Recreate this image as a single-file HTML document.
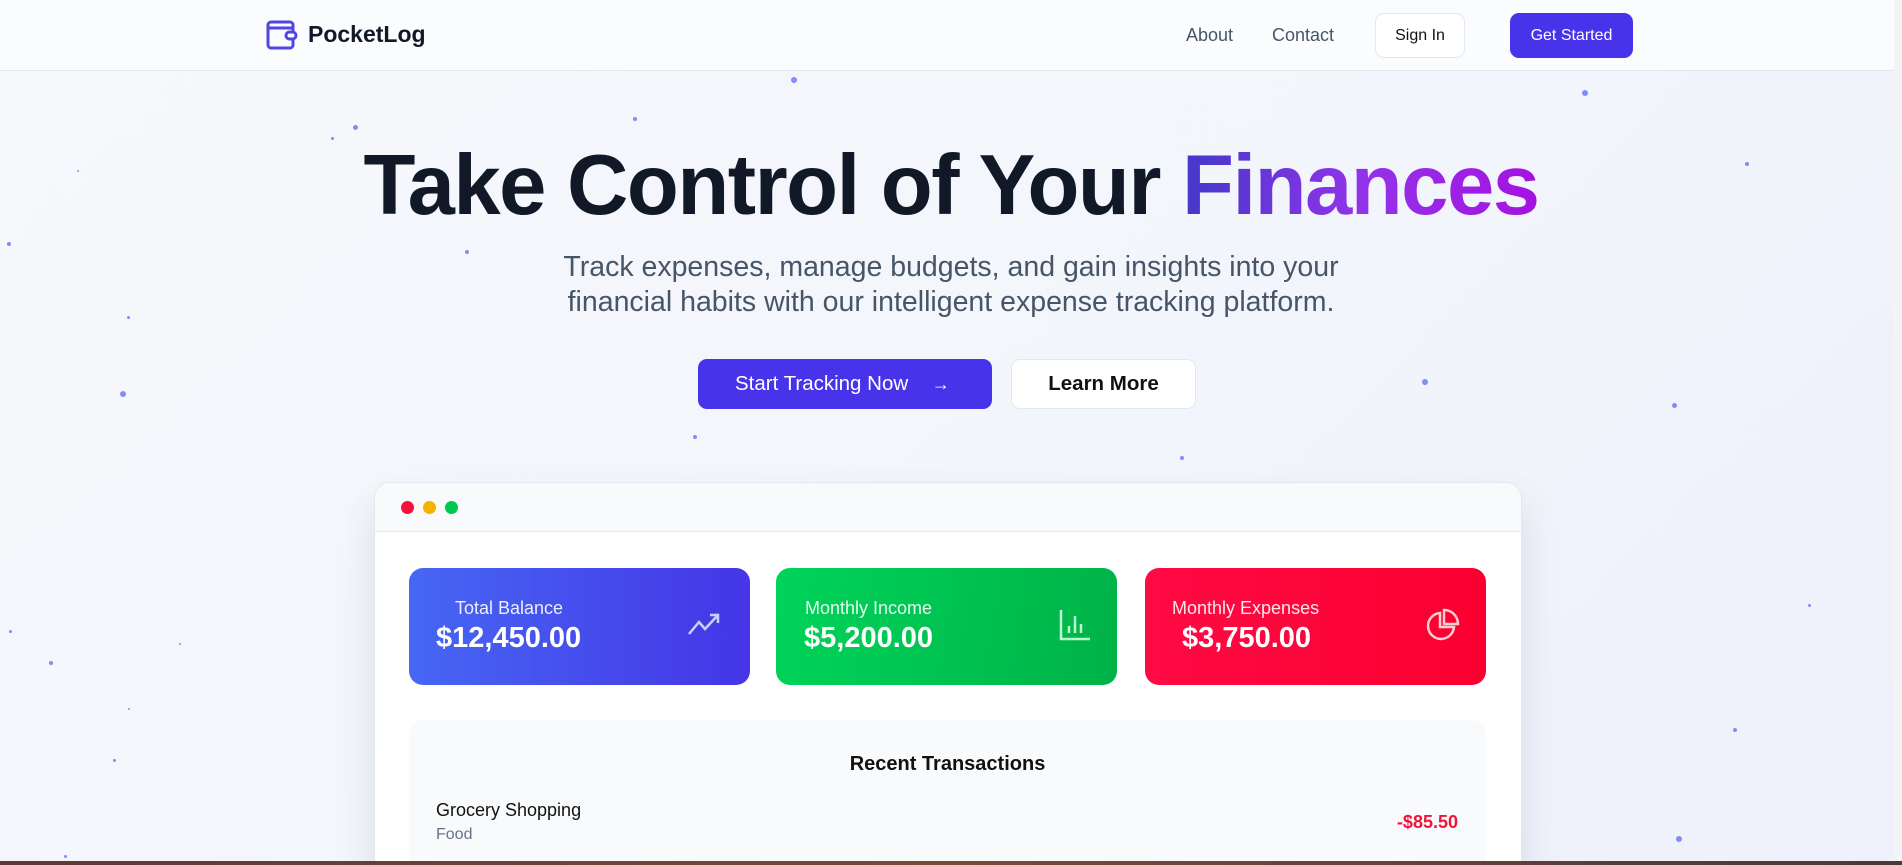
<!DOCTYPE html>
<html><head><meta charset="utf-8"><style>
*{margin:0;padding:0;box-sizing:border-box}
html,body{width:1902px;height:865px;overflow:hidden}
body{font-family:"Liberation Sans",sans-serif;background:linear-gradient(135deg,#f6f8fb 0%,#f2f5fb 60%,#eef0fb 100%);position:relative;color:#0f172a}
.nav{position:absolute;left:0;top:0;width:1902px;height:71px;background:#fbfcfe;border-bottom:1px solid #e2e8f0}
.abs{position:absolute}
.dot{position:absolute;border-radius:50%;background:#818cf8}
h1{position:absolute;left:0;width:1902px;top:136px;text-align:center;font-size:85px;font-weight:700;letter-spacing:-1.5px;color:#111827;line-height:100px}
h1 span{-webkit-background-clip:text;background-clip:text;color:transparent;background-image:linear-gradient(90deg,#4338ca,#9333ea,#a511e0)}
.sub{position:absolute;left:0;width:1902px;top:250px;text-align:center;font-size:28.5px;line-height:35px;color:#475569}
.card{position:absolute;border-radius:14px;color:#fff}
.card .l{position:absolute;font-size:18px;opacity:.9}
.card .v{position:absolute;font-size:29px;font-weight:700}
</style></head><body>
<div class="nav">
 <svg class="abs" style="left:266px;top:19px" width="32" height="32" viewBox="0 0 32 32" fill="none" stroke="#4f46e5" stroke-width="3"><rect x="2" y="3" width="25" height="26" rx="3"/><path d="M2 9h25"/><rect x="20" y="13" width="10" height="7" rx="3.5" fill="#fbfcfe"/></svg>
 <div class="abs" style="left:308px;top:21px;font-size:23px;font-weight:700;color:#111827">PocketLog</div>
 <div class="abs" style="left:1186px;top:25px;font-size:18px;color:#475569">About</div>
 <div class="abs" style="left:1272px;top:25px;font-size:18px;color:#475569">Contact</div>
 <div class="abs" style="left:1375px;top:13px;width:90px;height:45px;border:1px solid #e2e8f0;border-radius:9px;background:#fff;font-size:16px;text-align:center;line-height:43px;color:#111">Sign In</div>
 <div class="abs" style="left:1510px;top:13px;width:123px;height:45px;border-radius:9px;background:#4733ea;font-size:16px;text-align:center;line-height:45px;color:#fff">Get Started</div>
</div>
<div class="dot" style="left:791px;top:77px;width:6px;height:6px"></div>
<div class="dot" style="left:1582px;top:90px;width:6px;height:6px"></div>
<div class="dot" style="left:353px;top:125px;width:5px;height:5px"></div>
<div class="dot" style="left:633px;top:117px;width:4px;height:4px"></div>
<div class="dot" style="left:331px;top:137px;width:3px;height:3px"></div>
<div class="dot" style="left:1745px;top:162px;width:4px;height:4px"></div>
<div class="dot" style="left:77px;top:170px;width:2px;height:2px"></div>
<div class="dot" style="left:7px;top:242px;width:4px;height:4px"></div>
<div class="dot" style="left:465px;top:250px;width:4px;height:4px"></div>
<div class="dot" style="left:127px;top:316px;width:3px;height:3px"></div>
<div class="dot" style="left:120px;top:391px;width:6px;height:6px"></div>
<div class="dot" style="left:1422px;top:379px;width:6px;height:6px"></div>
<div class="dot" style="left:1672px;top:403px;width:5px;height:5px"></div>
<div class="dot" style="left:693px;top:435px;width:4px;height:4px"></div>
<div class="dot" style="left:1180px;top:456px;width:4px;height:4px"></div>
<div class="dot" style="left:1808px;top:604px;width:3px;height:3px"></div>
<div class="dot" style="left:9px;top:630px;width:3px;height:3px"></div>
<div class="dot" style="left:49px;top:661px;width:4px;height:4px"></div>
<div class="dot" style="left:179px;top:643px;width:2px;height:2px"></div>
<div class="dot" style="left:128px;top:708px;width:2px;height:2px"></div>
<div class="dot" style="left:1733px;top:728px;width:4px;height:4px"></div>
<div class="dot" style="left:113px;top:759px;width:3px;height:3px"></div>
<div class="dot" style="left:1676px;top:836px;width:6px;height:6px"></div>
<div class="dot" style="left:64px;top:855px;width:3px;height:3px"></div>
<h1>Take Control of Your <span>Finances</span></h1>
<div class="sub">Track expenses, manage budgets, and gain insights into your<br>financial habits with our intelligent expense tracking platform.</div>
<div class="abs" style="left:698px;top:359px;width:294px;height:50px;border-radius:9px;background:#4733ea;color:#fff;font-size:20.5px;line-height:50px;padding-left:37px">Start Tracking Now <span style="margin-left:18px;font-size:18px">→</span></div>
<div class="abs" style="left:1011px;top:359px;width:185px;height:50px;border-radius:9px;background:#fff;border:1px solid #e2e8f0;color:#111;font-size:20.5px;line-height:48px;text-align:center;font-weight:700">Learn More</div>
<div class="abs" style="left:374px;top:482px;width:1148px;height:400px;border-radius:16px;background:#fff;border:1px solid #e2e8f0;box-shadow:0 20px 40px rgba(15,23,42,.1);overflow:hidden">
 <div style="height:49px;background:#f8fafc;border-bottom:1px solid #e2e8f0;position:relative">
  <div class="dot" style="left:26px;top:18px;width:13px;height:13px;background:#f0143c"></div>
  <div class="dot" style="left:48px;top:18px;width:13px;height:13px;background:#f5b300"></div>
  <div class="dot" style="left:70px;top:18px;width:13px;height:13px;background:#00c851"></div>
 </div>
</div>
<div class="card" style="left:409px;top:568px;width:341px;height:117px;background:linear-gradient(90deg,#4667f4,#4535e6)">
 <div class="l" style="left:46px;top:30px">Total Balance</div><div class="v" style="left:27px;top:54px">$12,450.00</div>
 <svg class="abs" style="left:278px;top:42px" width="36" height="28" viewBox="0 0 36 28" fill="none" stroke="#c7d2fe" stroke-width="2.5"><path d="M2 24l10-12 6 7L31 5M23 5h8v8"/></svg>
</div>
<div class="card" style="left:776px;top:568px;width:341px;height:117px;background:linear-gradient(100deg,#00d45a,#00b248)">
 <div class="l" style="left:29px;top:30px">Monthly Income</div><div class="v" style="left:28px;top:54px">$5,200.00</div>
 <svg class="abs" style="left:282px;top:40px" width="34" height="34" viewBox="0 0 34 34" fill="none" stroke="#bbf7d0" stroke-width="2.5"><path d="M3 2v29h29M11 25v-7M17 25V8M23 25v-9"/></svg>
</div>
<div class="card" style="left:1145px;top:568px;width:341px;height:117px;background:linear-gradient(90deg,#ff0a44,#fa0030)">
 <div class="l" style="left:27px;top:30px">Monthly Expenses</div><div class="v" style="left:37px;top:54px">$3,750.00</div>
 <svg class="abs" style="left:279px;top:40px" width="36" height="36" viewBox="0 0 36 36" fill="none" stroke="#fecdd3" stroke-width="2.5"><path d="M16 5a13 13 0 1 0 14 14H16z"/><path d="M20 2v14h14A14 14 0 0 0 20 2z"/></svg>
</div>
<div class="abs" style="left:409px;top:720px;width:1077px;height:150px;border-radius:14px;background:#f8fafc">
 <div class="abs" style="left:0;width:1077px;top:33px;text-align:center;font-size:20px;font-weight:700;color:#111">Recent Transactions</div>
 <div class="abs" style="left:27px;top:80px;font-size:18px;color:#111">Grocery Shopping</div>
 <div class="abs" style="left:27px;top:106px;font-size:16px;color:#64748b">Food</div>
 <div class="abs" style="right:28px;top:92px;font-size:18px;font-weight:700;color:#f0143c">-$85.50</div>
</div>
<div class="abs" style="left:0;top:861px;width:1902px;height:4px;background:linear-gradient(90deg,#5a3a33,#7a4a3a,#4a3a35)"></div>
<div class="abs" style="left:1894px;top:0;width:8px;height:861px;background:#f3f4f6"></div>
</body></html>
